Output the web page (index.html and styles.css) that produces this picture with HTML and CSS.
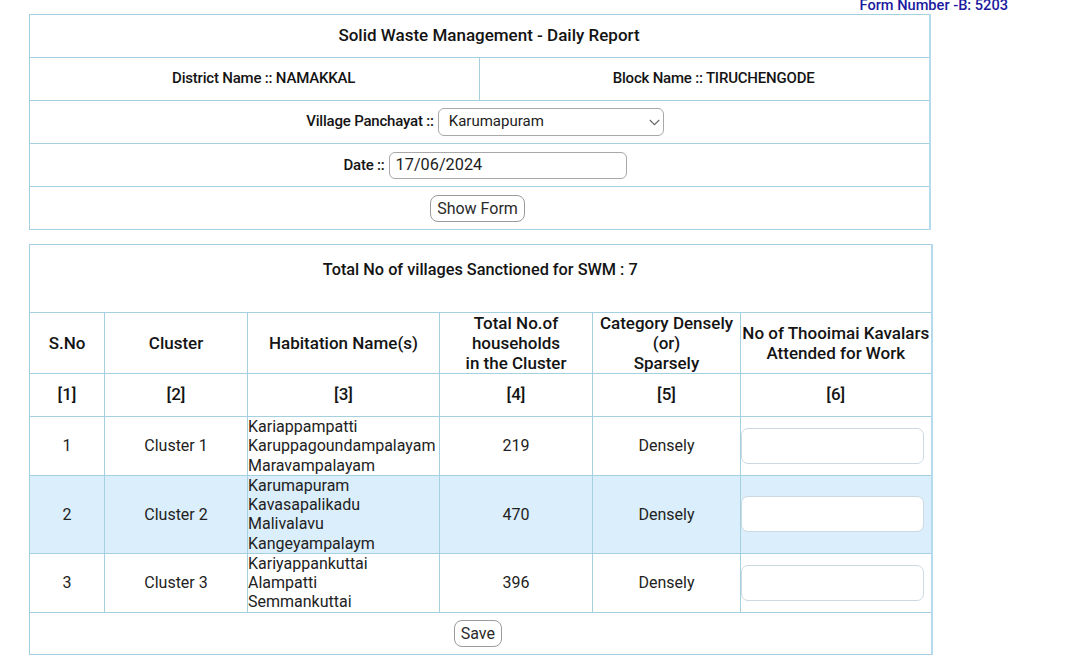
FILE: index.html
```html
<!DOCTYPE html>
<html>
<head>
<meta charset="utf-8">
<link rel="stylesheet" href="styles.css">
</head>
<body>
<div class="page">
  <div class="form-number">Form Number -B: 5203</div>
  <table class="grid top">
    <colgroup><col class="half"><col class="half"></colgroup>
    <tr><td colspan="2" class="hd big shift-title">Solid Waste Management - Daily Report</td></tr>
    <tr><td class="hd small shift">District Name :: NAMAKKAL</td><td class="hd small shift">Block Name :: TIRUCHENGODE</td></tr>
    <tr><td colspan="2" class="shift-sm"><span class="lbl">Village Panchayat ::</span><span class="select">Karumapuram<svg class="chev" width="11" height="7" viewBox="0 0 11 7"><path d="M0.8 1 L5.5 5.7 L10.2 1" fill="none" stroke="#666" stroke-width="1.1"/></svg></span></td></tr>
    <tr><td colspan="2" class="shift-sm"><span class="lbl">Date ::</span><span class="date">17/06/2024</span></td></tr>
    <tr><td colspan="2"><button class="btn show">Show Form</button></td></tr>
  </table>

  <table class="grid report">
    <colgroup>
      <col style="width:75px"><col style="width:143px"><col style="width:192px"><col style="width:153px"><col style="width:148px"><col style="width:191px">
    </colgroup>
    <tr><td colspan="6" class="title hd">Total No of villages Sanctioned for SWM : 7</td></tr>
    <tr class="head">
      <td class="hd">S.No</td>
      <td class="hd">Cluster</td>
      <td class="hd">Habitation Name(s)</td>
      <td class="hd">Total No.of<br>households<br>in the Cluster</td>
      <td class="hd">Category Densely<br>(or)<br>Sparsely</td>
      <td class="hd">No of Thooimai Kavalars<br>Attended for Work</td>
    </tr>
    <tr class="idx">
      <td class="hd">[1]</td><td class="hd">[2]</td><td class="hd">[3]</td><td class="hd">[4]</td><td class="hd">[5]</td><td class="hd">[6]</td>
    </tr>
    <tr class="row">
      <td>1</td><td>Cluster 1</td>
      <td class="hab">Kariappampatti<br>Karuppagoundampalayam<br>Maravampalayam</td>
      <td>219</td><td>Densely</td>
      <td class="inp"><span class="field"></span></td>
    </tr>
    <tr class="row alt">
      <td>2</td><td>Cluster 2</td>
      <td class="hab">Karumapuram<br>Kavasapalikadu<br>Malivalavu<br>Kangeyampalaym</td>
      <td>470</td><td>Densely</td>
      <td class="inp"><span class="field"></span></td>
    </tr>
    <tr class="row">
      <td>3</td><td>Cluster 3</td>
      <td class="hab">Kariyappankuttai<br>Alampatti<br>Semmankuttai</td>
      <td>396</td><td>Densely</td>
      <td class="inp"><span class="field"></span></td>
    </tr>
    <tr class="save-row"><td colspan="6" class="save-cell"><button class="btn save">Save</button></td></tr>
  </table>
</div>
</body>
</html>
```

FILE: styles.css
```css
html, body {
  margin: 0;
  padding: 0;
  background: #ffffff;
}
body {
  font-family: Roboto, "Liberation Sans", sans-serif;
  font-size: 16px;
  color: #1c1c1c;
  overflow: hidden;
}
.page {
  padding-left: 29px;
}
.form-number {
  width: 979px;
  text-align: right;
  font-size: 14.6px;
  line-height: 14px;
  height: 14px;
  margin-top: -2px;
  margin-bottom: 2px;
  color: #1a1aa0;
  font-weight: 500;
}
.grid {
  border-collapse: collapse;
  table-layout: fixed;
  width: 902px;
  border: 1px solid #b3dbec;
  border-right: 2px solid #b3dbec;
}
.grid td {
  border: 1px solid #a4d0e1;
  text-align: center;
  padding: 0;
  line-height: 19.2px;
  vertical-align: middle;
}
.hd {
  font-weight: 500;
  font-size: 17px;
  color: #141414;
}
.grid td.small {
  font-size: 15px;
  letter-spacing: -0.2px;
}
.grid td.shift {
  padding-left: 18px;
}
.grid td.shift-title {
  padding-left: 19px;
}
.grid td.shift-sm {
  padding-left: 11px;
}
.top td {
  height: 42px;
}
.top .half {
  width: 50%;
}
.lbl {
  font-weight: 500;
  font-size: 15px;
  letter-spacing: -0.2px;
  color: #141414;
  vertical-align: middle;
}
.select {
  display: inline-flex;
  align-items: center;
  justify-content: space-between;
  box-sizing: border-box;
  width: 226px;
  height: 28px;
  margin-left: 4px;
  padding: 0 3px 0 10px;
  border: 1px solid #a8a8a8;
  border-radius: 6px;
  font-size: 15px;
  text-align: left;
  vertical-align: middle;
  color: #1c1c1c;
}
.chev {
  display: block;
}
.date {
  display: inline-flex;
  align-items: center;
  box-sizing: border-box;
  width: 238px;
  height: 27px;
  margin-left: 4px;
  padding: 0 6px;
  border: 1px solid #a8a8a8;
  border-radius: 6px;
  font-size: 16.3px;
  text-align: left;
  vertical-align: middle;
  color: #1c1c1c;
}
.btn {
  font-family: Roboto, "Liberation Sans", sans-serif;
  font-size: 16px;
  color: #2a2a2a;
  background: #ffffff;
  border: 1px solid #9a9a9a;
  border-radius: 8px;
  height: 27px;
  padding: 0 6px;
  vertical-align: middle;
}
.show {
  margin-left: -4px;
}
.report {
  margin-top: 14px;
}
.grid td.title {
  height: 68px;
  font-size: 16.3px;
  vertical-align: top;
  padding-top: 15px;
  box-sizing: border-box;
}
.head td {
  height: 60px;
  line-height: 20px;
}
.idx td {
  height: 42px;
}
.row td {
  color: #222222;
}
.row td.hab {
  text-align: left;
}
.alt td {
  background: #dbeefb;
}
.grid td.inp {
  text-align: left;
}
.field {
  display: block;
  box-sizing: border-box;
  width: 183px;
  height: 36px;
  margin: 11px 0;
  background: #ffffff;
  border: 1px solid #cdd9e0;
  border-radius: 7px;
}
.save-row td {
  height: 42px;
}
.grid td.save-cell {
  padding-right: 5px;
  vertical-align: top;
  padding-top: 7px;
  box-sizing: border-box;
}
```
